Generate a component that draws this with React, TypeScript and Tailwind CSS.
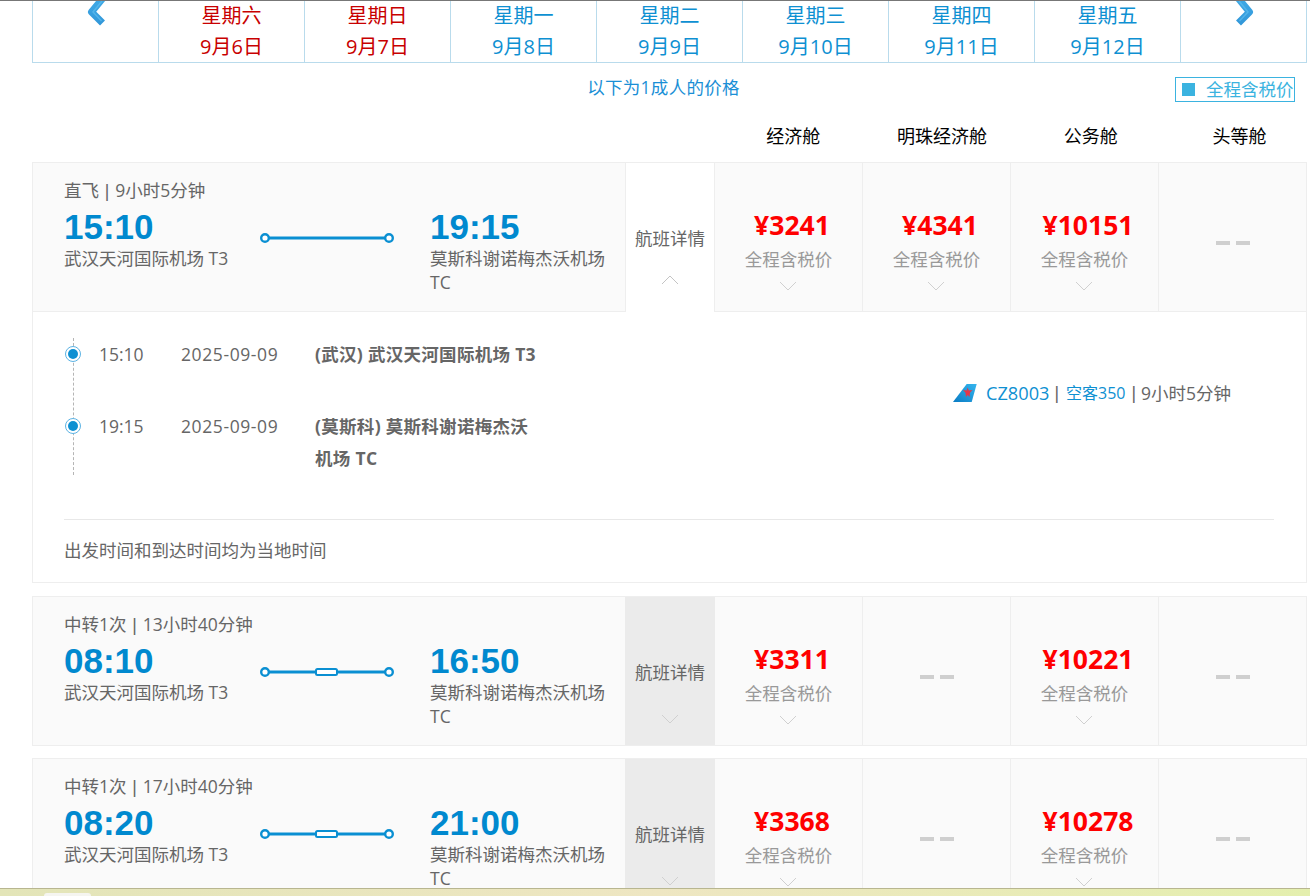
import React from "react";

const days = [
  ["星期六", "9月6日", true],
  ["星期日", "9月7日", true],
  ["星期一", "9月8日", false],
  ["星期二", "9月9日", false],
  ["星期三", "9月10日", false],
  ["星期四", "9月11日", false],
  ["星期五", "9月12日", false],
] as const;

const Arrow = ({ flip }: { flip?: boolean }) => (
  <svg width="22" height="28" viewBox="0 0 22 28" className={`block ${flip ? "-scale-x-100" : ""}`}>
    <defs>
      <linearGradient id={flip ? "arrowR" : "arrowL"} gradientUnits="userSpaceOnUse" x1="0" y1="0" x2="0" y2="26">
        <stop offset="0" stopColor="#3fa9e6" />
        <stop offset="1" stopColor="#3196d8" />
      </linearGradient>
    </defs>
    <path d="M17 -2 L5.5 12 L16.5 23" fill="none" stroke={`url(#${flip ? "arrowR" : "arrowL"})`} strokeWidth="7" strokeLinejoin="round" />
    <path d="M16 1 L7 12 L15.5 21" fill="none" stroke="#67c4f2" strokeOpacity="0.55" strokeWidth="1.5" />
  </svg>
);

const Chevron = ({ up }: { up?: boolean }) => (
  <svg width="18" height="10" viewBox="0 0 18 10" className="block">
    <path d={up ? "M1 9 L9 1 L17 9" : "M1 1 L9 9 L17 1"} fill="none" stroke={up ? "#c4c4c4" : "#d0d0d0"} strokeWidth="1" />
  </svg>
);

const RouteLine = ({ stop }: { stop?: boolean }) => (
  <svg width="134" height="12" viewBox="0 0 134 12" className="block">
    <line x1="5" y1="6" x2="129" y2="6" stroke="#0a8fd2" strokeWidth="3" />
    <circle cx="5" cy="6" r="3.8" fill="#fff" stroke="#0a8fd2" strokeWidth="2.4" />
    <circle cx="129" cy="6" r="3.8" fill="#fff" stroke="#0a8fd2" strokeWidth="2.4" />
    {stop && <rect x="56" y="3" width="21" height="6" rx="1.5" fill="#fff" stroke="#0a8fd2" strokeWidth="2" />}
  </svg>
);

const Dot = () => (
  <span className="flex h-4 w-4 items-center justify-center rounded-full border border-[#5cb3e4] bg-white">
    <span className="h-[10px] w-[10px] rounded-full bg-[#0e90d2]" />
  </span>
);

const Logo = () => (
  <svg width="24" height="20" viewBox="0 0 24 20" className="block">
    <defs>
      <linearGradient id="tail" x1="0" y1="1" x2="1" y2="0">
        <stop offset="0" stopColor="#0a7cc4" />
        <stop offset="1" stopColor="#35b5ee" />
      </linearGradient>
    </defs>
    <path d="M0 19 L13.7 1 L23.7 1 L18.7 19 Z" fill="url(#tail)" />
    <path d="M14.7 4.5 L15.8 7.5 L19.5 7 L17 9.7 L16.5 14 L14.7 12 L13 14 L12.5 9.7 L10 7 L13.6 7.5 Z" fill="#e2364a" />
  </svg>
);

const Bar = () => <span className="mx-[1.25px] font-['Liberation_Sans',sans-serif]">|</span>;

function PriceCell({ price, first }: { price?: string; first?: boolean }) {
  if (!price) {
    return (
      <div className="flex w-[148px] shrink-0 items-start justify-center border-l border-[#eeeeee] pt-[78px]">
        <span className="flex gap-[6px]">
          <span className="h-[4px] w-[14px] bg-[#cfcfcf]" />
          <span className="h-[4px] w-[14px] bg-[#cfcfcf]" />
        </span>
      </div>
    );
  }
  return (
    <div className={`flex shrink-0 flex-col items-center pt-[44px] ${first ? "w-[147px]" : "w-[148px] border-l border-[#eeeeee]"}`}>
      <span className="ml-[7px] text-[26.5px] font-bold leading-[36px] text-[#ff0000]">{price}</span>
      <span className="mt-[2px] text-[17.5px] leading-[28px] text-[#999999]">全程含税价</span>
      <span className="mt-[8px] -ml-[2px]"><Chevron /></span>
    </div>
  );
}

function Row({
  kind, time, dep, arr, stop, prices, open,
}: {
  kind: string; time: string; dep: string; arr: string; stop?: boolean; prices: (string | undefined)[]; open?: boolean;
}) {
  return (
    <div className={`flex h-[150px] w-[1275px] shrink-0 border-[#eeeeee] bg-[#fafafa] ${open ? "border-t border-r" : "border"}`}>
      <div className={`flex shrink-0 flex-col pl-[31px] pt-[14px] ${open ? "w-[593px] border-b border-l border-[#eeeeee]" : "w-[592px]"}`}>
        <div className="text-[17.5px] leading-[26px] text-[#666666]">{kind} <Bar /> {time}</div>
        <div className="mt-[3px] flex">
          <div className="w-[196px] shrink-0">
            <div className="font-['Liberation_Sans',sans-serif] text-[35px] font-bold leading-[39px] text-[#0089cf]">{dep}</div>
            <div className="text-[17.5px] leading-[24px] text-[#666666]">武汉天河国际机场 T3</div>
          </div>
          <div className="w-[170px] shrink-0 pt-[25px]"><RouteLine stop={stop} /></div>
          <div className="w-[180px] shrink-0">
            <div className="font-['Liberation_Sans',sans-serif] text-[35px] font-bold leading-[39px] text-[#0089cf]">{arr}</div>
            <div className="text-[17.5px] leading-[24px] text-[#666666]">莫斯科谢诺梅杰沃机场 TC</div>
          </div>
        </div>
      </div>
      <div className={`flex w-[90px] shrink-0 flex-col items-center pt-[61px] text-[17.5px] leading-[28px] text-[#666666] ${open ? "border-l border-r border-[#eeeeee] bg-white" : "bg-[#ebebeb]"}`}>
        <span>航班详情</span>
        <span className={open ? "mt-[23px]" : "mt-[28px]"}><Chevron up={open} /></span>
      </div>
      <div className={`flex flex-1 ${open ? "border-b border-[#eeeeee]" : ""}`}>
        {prices.map((p, i) => <PriceCell key={i} price={p} first={i === 0} />)}
      </div>
    </div>
  );
}

function Detail() {
  return (
    <div className="flex h-[271px] w-[1275px] shrink-0 flex-col border-x border-b border-[#eeeeee] bg-white pl-[31px] pr-8 text-[17.5px] text-[#666666]">
      <div className="relative flex h-[207px] shrink-0 items-start">
        <span className="absolute left-[9px] top-[26px] h-[137px] border-l border-dashed border-[#b5b5b5]" />
        <div className="w-[250px] shrink-0 pt-[28px] pl-[1px]">
          <div className="flex h-[28px] items-center">
            <span className="relative w-[34px]"><Dot /></span>
            <span className="w-[82px]">15:10</span>
            <span className="tracking-[0.6px]">2025-09-09</span>
          </div>
          <div className="mt-[44px] flex h-[28px] items-center">
            <span className="relative w-[34px]"><Dot /></span>
            <span className="w-[82px]">19:15</span>
            <span className="tracking-[0.6px]">2025-09-09</span>
          </div>
        </div>
        <div className="w-[220px] shrink-0 pt-[26px] pl-[1px] font-bold leading-[32px] tracking-[0.3px]">
          <div className="mb-[40px] whitespace-nowrap">(武汉) 武汉天河国际机场 T3</div>
          <div>(莫斯科) 莫斯科谢诺梅杰沃机场 TC</div>
        </div>
        <div className="ml-[419px] flex items-center pt-[65px] leading-[32px] whitespace-nowrap">
          <span className="mr-[9px]"><Logo /></span>
          <span className="text-[18.2px] text-[#0e90d2]">CZ8003</span>
          <span className="ml-[5px] mr-[7px] font-['Liberation_Sans',sans-serif]">|</span>
          <span className="text-[16px] text-[#0e90d2]">空客350</span>
          <span className="ml-[6px] mr-[5px] font-['Liberation_Sans',sans-serif]">|</span>
          <span>9小时5分钟</span>
        </div>
      </div>
      <div className="border-t border-[#e8e8e8] pt-[16px] leading-[28px]">出发时间和到达时间均为当地时间</div>
    </div>
  );
}

export default function App() {
  return (
    <div className="flex h-[896px] w-[1310px] flex-col overflow-hidden bg-white font-['Open_Sans','Noto_Sans_CJK_SC',sans-serif]">
      <div className="min-h-0 flex-1 overflow-hidden border-t border-[#777777] pl-8">
        <div className="flex h-[62px] w-[1275px] border-x border-b border-[#b9dbec]">
          <div className="w-[125px] shrink-0 pl-[53px]"><div className="-mt-[1px]"><Arrow /></div></div>
          {days.map(([w, d, red]) => (
            <div key={w} className={`flex w-[146px] shrink-0 flex-col items-center border-l border-[#b9dbec] text-[20px] leading-[30px] ${red ? "text-[#c80000]" : "text-[#0e90d2]"}`}>
              <span>{w}</span>
              <span className="mt-[1px]">{d}</span>
            </div>
          ))}
          <div className="flex-1 border-l border-[#b9dbec] pl-[52px]"><div className="-mt-[1px]"><Arrow flip /></div></div>
        </div>

        <div className="relative flex h-[44px] w-[1263px] items-center justify-center">
          <span className="mt-[4px] text-[17.5px] tracking-[0.3px] text-[#1a8fd6]">以下为1成人的价格</span>
          <div className="absolute left-[1143px] top-[14px] flex h-[25px] w-[120px] items-center overflow-hidden border border-[#3bb3e0] pl-[6px] text-[17.5px] whitespace-nowrap text-[#3bb3e0]">
            <span className="mr-[11px] h-[13px] w-[13px] shrink-0 bg-[#3bb3e0]" />
            全程含税价
          </div>
        </div>

        <div className="flex h-[55px] w-[1275px] text-[18px] text-black">
          <div className="w-[687px] shrink-0" />
          {["经济舱", "明珠经济舱", "公务舱", "头等舱"].map((c) => (
            <div key={c} className="flex w-[148.7px] shrink-0 justify-center pt-[14px] leading-[30px]">{c}</div>
          ))}
        </div>

        <Row open kind="直飞" time="9小时5分钟" dep="15:10" arr="19:15" prices={["¥3241", "¥4341", "¥10151", undefined]} />
        <Detail />
        <div className="mt-[13px]">
          <Row stop kind="中转1次" time="13小时40分钟" dep="08:10" arr="16:50" prices={["¥3311", undefined, "¥10221", undefined]} />
        </div>
        <div className="mt-[12px]">
          <Row stop kind="中转1次" time="17小时40分钟" dep="08:20" arr="21:00" prices={["¥3368", undefined, "¥10278", undefined]} />
        </div>
      </div>
      <div className="flex h-[8px] shrink-0 items-end border-t border-[#b8b690] bg-gradient-to-r from-[#e3e5b8] via-[#eee6c2] to-[#e4efae] pl-[44px]">
        <span className="h-[3px] w-[47px] rounded-t-[4px] bg-[#f5f5f0]" />
      </div>
    </div>
  );
}
